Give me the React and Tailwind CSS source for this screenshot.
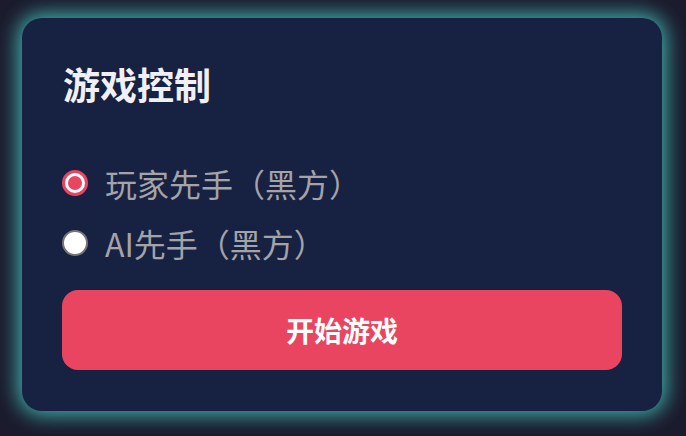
const font = { fontFamily: '"Noto Sans CJK SC", "Noto Sans", sans-serif' };

const Radio = ({ checked, label }) => (
    <label className="flex items-center gap-[17px] cursor-pointer">
        <span
            className={`w-[26px] h-[26px] rounded-full shrink-0 flex items-center justify-center bg-white ${checked ? "border-[3px] border-[#e94560]" : "border-2 border-[#767676]"}`}
        >
            {checked && <span className="w-[14px] h-[14px] rounded-full bg-[#e94560]" />}
        </span>
        <span className="text-[32px] leading-none text-[#a3a3a8]">{label}</span>
    </label>
);

export default function App() {
    return (
        <div className="w-[686px] h-[436px] bg-[#1b1b2d] pl-[22px] pt-[18px]" style={font}>
            <div className="w-[640px] h-[393px] rounded-[20px] bg-[#172141] px-[40px] pt-[39px] shadow-[0_0_20px_4px_rgba(70,205,195,0.85)]">
                <h2 className="text-[37px] font-bold text-[#f0f0f4] leading-[1.5] pl-px">游戏控制</h2>
                <div className="mt-[54px] flex flex-col gap-[28px]">
                    <Radio checked label="玩家先手（黑方）" />
                    <Radio label="AI先手（黑方）" />
                </div>
                <button className="mt-[31px] w-[560px] h-[80px] rounded-[16px] bg-[#e94560] text-white text-[28px] font-bold">
                    开始游戏
                </button>
            </div>
        </div>
    );
}
